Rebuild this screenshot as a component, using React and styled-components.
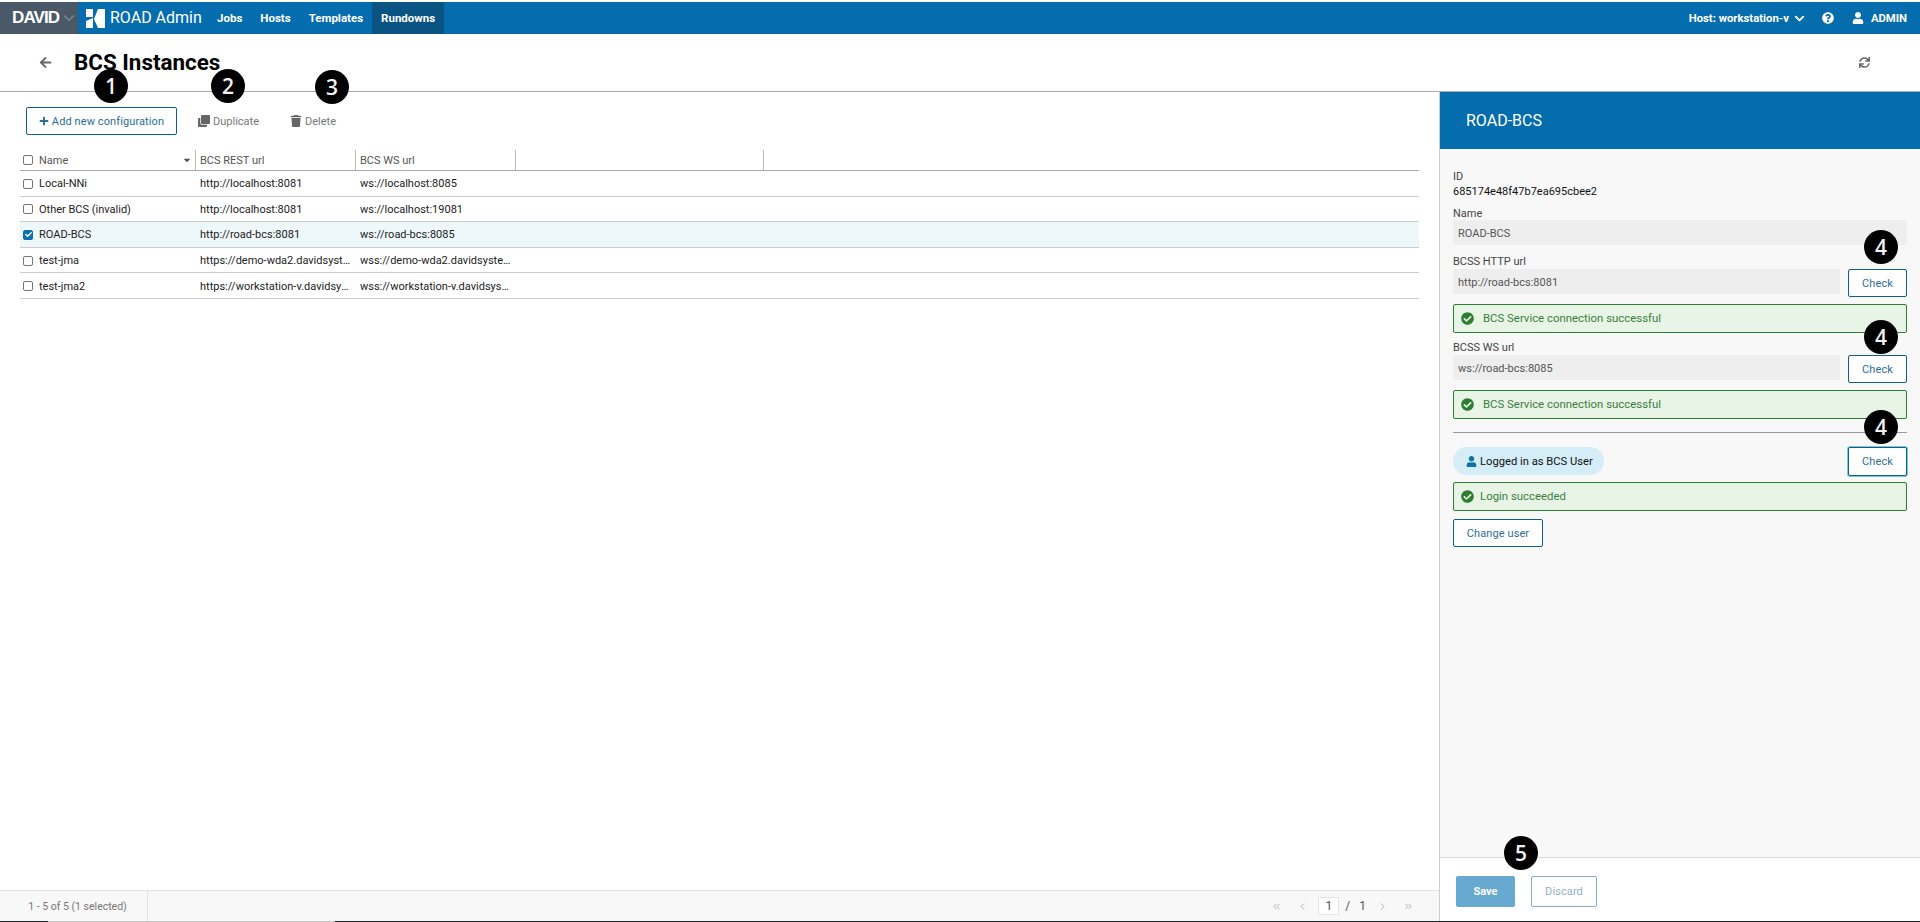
import React from 'react';
import styled, { createGlobalStyle } from 'styled-components';
import { FaPlus, FaClone, FaTrash, FaQuestionCircle, FaUser, FaCheckCircle, FaSync, FaArrowLeft, FaCheck, FaCaretDown } from 'react-icons/fa';
import { ChevronDown, ChevronLeft, ChevronRight, ChevronsLeft, ChevronsRight } from 'lucide-react';

const GlobalStyle = createGlobalStyle`
  html, body { margin: 0; padding: 0; height: 100%; background: #fff; }
  body { font-family: Roboto, "Liberation Sans", sans-serif; font-size: 11px; color: #222; overflow: hidden; }
  * { box-sizing: border-box; }
`;

const Page = styled.div`
  height: 922px;
  display: flex;
  flex-direction: column;
  padding-top: 2px;
`;

const Header = styled.header`
  height: 32px;
  flex: none;
  display: flex;
  align-items: stretch;
  background: #056cae;
  color: #fff;
`;

const Brand = styled.div`
  width: 78px;
  flex: none;
  background: #4a5968;
  display: flex;
  align-items: center;
  padding-left: 12px;
  gap: 1px;
  font: bold 17px "Liberation Sans", sans-serif;
  letter-spacing: -0.9px;
  svg { color: #7e8a96; flex: none; }
`;

const Logo = styled.svg`
  width: 20px;
  height: 19px;
  flex: none;
  margin: 7px 4px 0 8px;
`;

const AppName = styled.div`
  font-size: 16px;
  line-height: 32px;
  width: 98px;
  flex: none;
  white-space: nowrap;
`;

const NavItem = styled.a`
  padding: 0 9px;
  font-weight: 700;
  font-size: 11.5px;
  line-height: 32px;
  background: ${p => (p.$active ? '#0a5484' : 'transparent')};
`;

const HeaderRight = styled.div`
  margin-left: auto;
  display: flex;
  align-items: center;
  padding-right: 13px;
  font-weight: 700;
  font-size: 11.3px;
`;

const HostLabel = styled.span`
  margin-right: 3px;
  white-space: nowrap;
`;

const HelpIcon = styled(FaQuestionCircle)`
  margin: 0 18px 0 15px;
  font-size: 12px;
`;

const UserIcon = styled(FaUser)`
  margin-right: 7px;
  font-size: 12px;
`;

const TitleBar = styled.div`
  height: 58px;
  flex: none;
  display: flex;
  align-items: center;
  padding: 0 50px 1px 39px;
  border-bottom: 1px solid #aaa;
  svg { color: #666; }
`;

const Title = styled.h1`
  margin: 0 0 0 22px;
  font-size: 22.4px;
  font-weight: 700;
  color: #000;
`;

const RefreshButton = styled(FaSync)`
  margin-left: auto;
  font-size: 11px;
`;

const Main = styled.div`
  flex: 1;
  min-height: 0;
  display: flex;
`;

const LeftPane = styled.div`
  flex: 1;
  min-width: 0;
  display: flex;
  flex-direction: column;
`;

const Toolbar = styled.div`
  height: 58px;
  flex: none;
  display: flex;
  align-items: center;
  padding: 0 0 0 26px;
`;

const OutlineButton = styled.button`
  height: ${p => p.$h || 28}px;
  width: ${p => p.$w}px;
  padding: 0;
  flex: none;
  background: #fff;
  border: 1px solid #105f85;
  border-radius: 2px;
  color: #2a6f96;
  font: 400 11px Roboto, sans-serif;
  letter-spacing: 0.1px;
  display: flex;
  align-items: center;
  justify-content: center;
  gap: 3px;
  white-space: nowrap;
`;

const GhostButton = styled.button`
  background: none;
  border: 0;
  padding: 0;
  margin-left: ${p => p.$ml}px;
  color: #777;
  font: 400 11px Roboto, sans-serif;
  display: flex;
  align-items: center;
  gap: 3px;
  svg { font-size: 12px; color: #666; }
`;

const Table = styled.div`
  margin: 0 20px;
  flex: 1;
`;

const TableRow = styled.div`
  display: grid;
  grid-template-columns: 176px 160px 160px 248px 1fr;
  height: ${p => (p.$head ? 21 : 25.6)}px;
  align-items: center;
  border-bottom: 1px solid ${p => (p.$head ? '#aaa' : '#ccc')};
  background: ${p => (p.$selected ? '#eef7f9' : 'transparent')};
  color: ${p => (p.$head ? '#555' : '#222')};
`;

const Cell = styled.div`
  height: 100%;
  display: flex;
  align-items: center;
  padding: ${p => (p.$head ? 0 : 1)}px ${p => (p.$first ? 0 : 5)}px 0 ${p => (p.$first ? 3 : 4)}px;
  gap: 6px;
  border-right: ${p => (p.$head ? '1px solid #bbb' : '0')};
  min-width: 0;
`;

const CellText = styled.span`
  overflow: hidden;
  white-space: nowrap;
  text-overflow: ellipsis;
`;

const SortCaret = styled(FaCaretDown)`
  margin-left: auto;
  margin-right: 3px;
  font-size: 10px;
  color: #555;
`;

const CheckBox = styled.span`
  width: 10px;
  height: 10px;
  flex: none;
  border-radius: 2px;
  border: 1px solid ${p => (p.$checked ? '#0b6fb0' : '#777')};
  background: ${p => (p.$checked ? '#0b6fb0' : '#fff')};
  color: #fff;
  display: flex;
  align-items: center;
  justify-content: center;
  svg { font-size: 7px; }
`;

const StatusBar = styled.div`
  height: 31px;
  flex: none;
  display: flex;
  align-items: center;
  background: #f8f8f8;
  border-top: 1px solid #e2e2e2;
  color: #777;
  font-size: 10.5px;
`;

const StatusCount = styled.div`
  width: 148px;
  height: 100%;
  display: flex;
  align-items: center;
  justify-content: center;
  padding-left: 8px;
  border-right: 1px solid #e2e2e2;
`;

const Pager = styled.div`
  margin-left: auto;
  padding-right: 25px;
  display: flex;
  align-items: center;
  gap: 15px;
  font-size: 12px;
  svg { color: #aaa; }
`;

const PageNums = styled.div`
  display: flex;
  align-items: center;
  gap: 6px;
  margin: 0 -4px 0 -5px;
  color: #555;
`;

const PageInput = styled.span`
  width: 21px;
  height: 18px;
  background: #fff;
  border: 1px solid #e4e4e4;
  display: flex;
  align-items: center;
  justify-content: center;
`;

const SidePanel = styled.aside`
  width: 481px;
  flex: none;
  display: flex;
  flex-direction: column;
  border-left: 1px solid #ccc;
`;

const PanelHeader = styled.div`
  height: 57px;
  flex: none;
  background: #056cae;
  color: #fff;
  font-size: 16px;
  display: flex;
  align-items: center;
  padding-left: 26px;
`;

const PanelBody = styled.div`
  flex: 1;
  background: #f8f8f8;
  border-bottom: 1px solid #d8d8d8;
  padding: 20px 13px 0 13px;
  display: flex;
  flex-direction: column;
`;

const FieldLabel = styled.div`
  height: 14px;
  line-height: 14px;
  padding-top: 1px;
  color: #444;
  margin-top: ${p => p.$mt || 0}px;
`;

const Value = styled.div`
  height: 16px;
  line-height: 16px;
  padding-top: 1px;
  color: #111;
`;

const FieldInput = styled.div`
  height: 25px;
  background: #eee;
  color: #555;
  padding: 1px 0 0 5px;
  display: flex;
  align-items: center;
  flex: 1;
`;

const FieldRow = styled.div`
  display: flex;
  align-items: flex-start;
  gap: 8px;
  margin-top: ${p => p.$mt || 0}px;
`;

const Alert = styled.div`
  height: 29px;
  margin-top: ${p => p.$mt || 6}px;
  background: #e8f5e6;
  border: 1px solid #2e7d32;
  border-radius: 2px;
  color: #3c7d40;
  font-size: 11.4px;
  display: flex;
  align-items: center;
  padding: 0 0 1px 7px;
  gap: ${p => p.$gap}px;
  svg { color: #2e7d32; font-size: 13px; flex: none; }
`;

const Divider = styled.hr`
  margin: 13px 0 14px;
  border: 0;
  border-top: 1px solid #999;
`;

const LoginRow = styled.div`
  display: flex;
  align-items: center;
  justify-content: space-between;
  height: 28px;
`;

const UserPill = styled.div`
  width: 151px;
  height: 28px;
  border-radius: 14px;
  background: #d5edf6;
  color: #111;
  font-size: 11.2px;
  display: flex;
  align-items: center;
  padding-left: 13px;
  gap: 3px;
  svg { color: #10749e; font-size: 11px; }
`;

const FocusCheck = styled(OutlineButton)`
  height: 29px;
  box-shadow: 0 0 0 1px #7fc4dc;
`;

const ChangeUser = styled(OutlineButton)`
  margin-top: 8px;
`;

const PanelFooter = styled.div`
  height: 63px;
  flex: none;
  display: flex;
  align-items: center;
  padding: 3px 0 0 16px;
  gap: 16px;
`;

const SaveButton = styled.button`
  width: 59px;
  height: 31px;
  border: 0;
  border-radius: 2px;
  background: #67a9d0;
  color: #fff;
  font: 700 11px Roboto, sans-serif;
`;

const DiscardButton = styled(OutlineButton)`
  height: 31px;
  border-color: #86acc2;
  color: #8fb0c4;
`;

const BottomEdge = styled.div`
  height: 1px;
  flex: none;
  display: flex;
  background: #1d2229;
`;

const EdgeGap = styled.div`
  width: 287px;
  margin-left: 48px;
  background: #c8c8c8;
`;

const Marker = styled.div`
  position: absolute;
  left: ${p => p.$x - 17}px;
  top: ${p => p.$y - 17}px;
  width: 34px;
  height: 34px;
  border-radius: 50%;
  background: #000;
  color: #f2f2f2;
  font: 600 21px "Open Sans", sans-serif;
  display: flex;
  align-items: center;
  justify-content: center;
`;

const rows = [
  { name: 'Local-NNi', rest: 'http://localhost:8081', ws: 'ws://localhost:8085' },
  { name: 'Other BCS (invalid)', rest: 'http://localhost:8081', ws: 'ws://localhost:19081' },
  { name: 'ROAD-BCS', rest: 'http://road-bcs:8081', ws: 'ws://road-bcs:8085', selected: true },
  { name: 'test-jma', rest: 'https://demo-wda2.davidsystems.com:8081', ws: 'wss://demo-wda2.davidsystems.com:8085' },
  { name: 'test-jma2', rest: 'https://workstation-v.davidsystems.com:8081', ws: 'wss://workstation-v.davidsystems.com:8085' },
];

const markers = [
  { n: 1, x: 111, y: 86 },
  { n: 2, x: 228, y: 86 },
  { n: 3, x: 332, y: 87 },
  { n: 4, x: 1881, y: 247 },
  { n: 4, x: 1881, y: 337 },
  { n: 4, x: 1881, y: 427 },
  { n: 5, x: 1521, y: 853 },
];

const App = () => (
  <Page>
    <GlobalStyle />
    <Header>
      <Brand>
        DAVID
        <ChevronDown size={18} strokeWidth={1.5} />
      </Brand>
      <Logo viewBox="0 0 20 19" fill="#fff">
        <path d="M0 0h7v8H0z" />
        <path d="M0 12l7-3v10H0z" />
        <path d="M12 0h7v19h-7L8 10z" />
      </Logo>
      <AppName>ROAD Admin</AppName>
      <NavItem>Jobs</NavItem>
      <NavItem>Hosts</NavItem>
      <NavItem>Templates</NavItem>
      <NavItem $active>Rundowns</NavItem>
      <HeaderRight>
        <HostLabel>Host: workstation-v</HostLabel>
        <ChevronDown size={15} strokeWidth={3} />
        <HelpIcon />
        <UserIcon />
        ADMIN
      </HeaderRight>
    </Header>
    <TitleBar>
      <FaArrowLeft size={13} />
      <Title>BCS Instances</Title>
      <RefreshButton />
    </TitleBar>
    <Main>
      <LeftPane>
        <Toolbar>
          <OutlineButton $w={151}>
            <FaPlus size={10} />
            Add new configuration
          </OutlineButton>
          <GhostButton $ml={21}><FaClone />Duplicate</GhostButton>
          <GhostButton $ml={31}><FaTrash />Delete</GhostButton>
        </Toolbar>
        <Table>
          <TableRow $head>
            <Cell $head $first>
              <CheckBox />
              <CellText>Name</CellText>
              <SortCaret />
            </Cell>
            <Cell $head><CellText>BCS REST url</CellText></Cell>
            <Cell $head><CellText>BCS WS url</CellText></Cell>
            <Cell $head />
            <Cell />
          </TableRow>
          {rows.map(r => (
            <TableRow key={r.name} $selected={r.selected}>
              <Cell $first>
                <CheckBox $checked={r.selected}>{r.selected && <FaCheck />}</CheckBox>
                <CellText>{r.name}</CellText>
              </Cell>
              <Cell><CellText>{r.rest}</CellText></Cell>
              <Cell><CellText>{r.ws}</CellText></Cell>
              <Cell />
              <Cell />
            </TableRow>
          ))}
        </Table>
        <StatusBar>
          <StatusCount>1 - 5 of 5 (1 selected)</StatusCount>
          <Pager>
            <ChevronsLeft size={11} />
            <ChevronLeft size={11} />
            <PageNums>
              <PageInput>1</PageInput>/<span>&nbsp;1</span>
            </PageNums>
            <ChevronRight size={11} />
            <ChevronsRight size={11} />
          </Pager>
        </StatusBar>
      </LeftPane>
      <SidePanel>
        <PanelHeader>ROAD-BCS</PanelHeader>
        <PanelBody>
          <FieldLabel>ID</FieldLabel>
          <Value>685174e48f47b7ea695cbee2</Value>
          <FieldLabel $mt={7}>Name</FieldLabel>
          <FieldRow>
            <FieldInput>ROAD-BCS</FieldInput>
          </FieldRow>
          <FieldLabel $mt={9}>BCSS HTTP url</FieldLabel>
          <FieldRow $mt={1}>
            <FieldInput>http://road-bcs:8081</FieldInput>
            <OutlineButton $w={59}>Check</OutlineButton>
          </FieldRow>
          <Alert $mt={7} $gap={9}><FaCheckCircle />BCS Service connection successful</Alert>
          <FieldLabel $mt={7}>BCSS WS url</FieldLabel>
          <FieldRow $mt={1}>
            <FieldInput>ws://road-bcs:8085</FieldInput>
            <OutlineButton $w={59}>Check</OutlineButton>
          </FieldRow>
          <Alert $mt={7} $gap={9}><FaCheckCircle />BCS Service connection successful</Alert>
          <Divider />
          <LoginRow>
            <UserPill><FaUser />Logged in as BCS User</UserPill>
            <FocusCheck $w={59}>Check</FocusCheck>
          </LoginRow>
          <Alert $mt={7} $gap={6}><FaCheckCircle />Login succeeded</Alert>
          <div><ChangeUser $w={90}>Change user</ChangeUser></div>
        </PanelBody>
        <PanelFooter>
          <SaveButton>Save</SaveButton>
          <DiscardButton $w={66}>Discard</DiscardButton>
        </PanelFooter>
      </SidePanel>
    </Main>
    <BottomEdge><EdgeGap /></BottomEdge>
    {markers.map(m => (
      <Marker key={`${m.n}-${m.y}`} $x={m.x} $y={m.y}>{m.n}</Marker>
    ))}
  </Page>
);

export default App;
